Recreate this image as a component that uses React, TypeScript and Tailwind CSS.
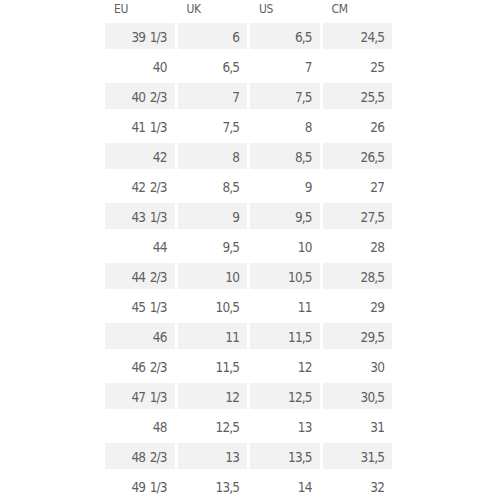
const rows: [string, string, string, string][] = [
  ['39 1/3', '6', '6,5', '24,5'],
  ['40', '6,5', '7', '25'],
  ['40 2/3', '7', '7,5', '25,5'],
  ['41 1/3', '7,5', '8', '26'],
  ['42', '8', '8,5', '26,5'],
  ['42 2/3', '8,5', '9', '27'],
  ['43 1/3', '9', '9,5', '27,5'],
  ['44', '9,5', '10', '28'],
  ['44 2/3', '10', '10,5', '28,5'],
  ['45 1/3', '10,5', '11', '29'],
  ['46', '11', '11,5', '29,5'],
  ['46 2/3', '11,5', '12', '30'],
  ['47 1/3', '12', '12,5', '30,5'],
  ['48', '12,5', '13', '31'],
  ['48 2/3', '13', '13,5', '31,5'],
  ['49 1/3', '13,5', '14', '32'],
];

const headers = ['EU', 'UK', 'US', 'CM'];

export default function App() {
  return (
    <div
      className="w-[500px] h-[500px] bg-white overflow-hidden text-[#5f5f5f]"
      style={{ fontFamily: '"DejaVu Sans Condensed", "Liberation Sans", sans-serif' }}
    >
      <div className="ml-[105px] w-[287px] grid grid-cols-4 gap-x-[3px] gap-y-[4px]">
        {/* Header */}
        {headers.map((h) => (
          <div key={h} className="h-[19px] pt-[1px] pl-[9px] text-[12px] leading-[16px] tracking-[-0.3px]">
            {h}
          </div>
        ))}

        {/* Size rows, every other one shaded */}
        {rows.map((row, i) =>
          row.map((cell, j) => (
            <div
              key={`${i}-${j}`}
              className={
                'h-[26px] pr-[8px] pt-[1px] text-right text-[13.5px] leading-[26px] tracking-[-0.9px] [word-spacing:1.5px] ' +
                (i % 2 === 0 ? 'bg-[#f2f2f2]' : 'bg-white')
              }
            >
              {cell}
            </div>
          ))
        )}
      </div>
    </div>
  );
}
